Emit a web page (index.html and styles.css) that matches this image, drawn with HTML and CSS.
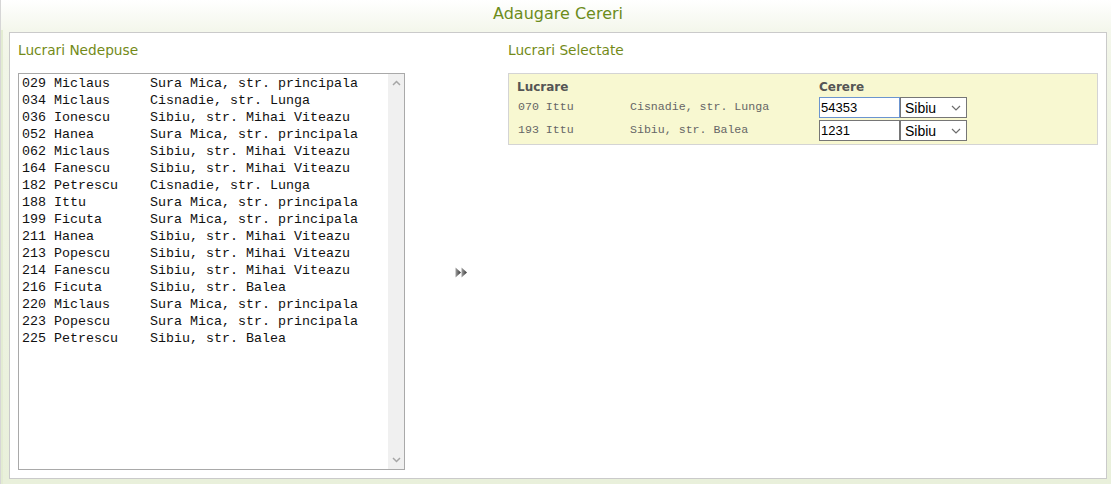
FILE: index.html
```html
<!DOCTYPE html>
<html>
<head>
<meta charset="utf-8">
<title>Adaugare Cereri</title>
<link rel="stylesheet" href="styles.css">
</head>
<body>
<div class="page">
  <div class="header">Adaugare Cereri</div>
  <div class="panel">
    <div class="col-title">Lucrari Nedepuse</div>
    <div></div>
    <div class="col-title">Lucrari Selectate</div>

    <div class="listbox">
      <div class="list-items">
        <div class="item">029 Miclaus     Sura Mica, str. principala</div>
        <div class="item">034 Miclaus     Cisnadie, str. Lunga</div>
        <div class="item">036 Ionescu     Sibiu, str. Mihai Viteazu</div>
        <div class="item">052 Hanea       Sura Mica, str. principala</div>
        <div class="item">062 Miclaus     Sibiu, str. Mihai Viteazu</div>
        <div class="item">164 Fanescu     Sibiu, str. Mihai Viteazu</div>
        <div class="item">182 Petrescu    Cisnadie, str. Lunga</div>
        <div class="item">188 Ittu        Sura Mica, str. principala</div>
        <div class="item">199 Ficuta      Sura Mica, str. principala</div>
        <div class="item">211 Hanea       Sibiu, str. Mihai Viteazu</div>
        <div class="item">213 Popescu     Sibiu, str. Mihai Viteazu</div>
        <div class="item">214 Fanescu     Sibiu, str. Mihai Viteazu</div>
        <div class="item">216 Ficuta      Sibiu, str. Balea</div>
        <div class="item">220 Miclaus     Sura Mica, str. principala</div>
        <div class="item">223 Popescu     Sura Mica, str. principala</div>
        <div class="item">225 Petrescu    Sibiu, str. Balea</div>
      </div>
      <div class="scrollbar">
        <svg class="sb-arrow" width="9" height="6" viewBox="0 0 9 6"><path d="M1 5 L4.5 1.5 L8 5" fill="none" stroke="#a6a6a6" stroke-width="1.5"/></svg>
        <svg class="sb-arrow" width="9" height="6" viewBox="0 0 9 6"><path d="M1 1 L4.5 4.5 L8 1" fill="none" stroke="#a6a6a6" stroke-width="1.5"/></svg>
      </div>
    </div>

    <div class="mover">
      <svg width="13" height="11" viewBox="0 0 13 11">
        <defs>
          <linearGradient id="tg" x1="0" y1="0" x2="1" y2="0">
            <stop offset="0" stop-color="#a0a0a0"/>
            <stop offset="1" stop-color="#333"/>
          </linearGradient>
        </defs>
        <polygon points="0.5,0.5 6,5.5 0.5,10.5" fill="url(#tg)"/>
        <polygon points="6.5,0.5 12,5.5 6.5,10.5" fill="url(#tg)"/>
      </svg>
    </div>

    <div class="selected">
      <div class="sel-box">
        <div class="th">Lucrare</div>
        <div class="th"></div>
        <div class="th">Cerere</div>

        <div class="td mono">070 Ittu</div>
        <div class="td mono">Cisnadie, str. Lunga</div>
        <div class="td ctrls">
          <input class="num focused" type="text" value="54353">
          <span class="city-wrap">
            <select class="city"><option>Sibiu</option></select>
            <svg class="chev" width="10" height="6" viewBox="0 0 10 6"><path d="M1 1 L5 5 L9 1" fill="none" stroke="#6d6d6d" stroke-width="1.2"/></svg>
          </span>
        </div>

        <div class="td mono">193 Ittu</div>
        <div class="td mono">Sibiu, str. Balea</div>
        <div class="td ctrls">
          <input class="num" type="text" value="1231">
          <span class="city-wrap">
            <select class="city"><option>Sibiu</option></select>
            <svg class="chev" width="10" height="6" viewBox="0 0 10 6"><path d="M1 1 L5 5 L9 1" fill="none" stroke="#6d6d6d" stroke-width="1.2"/></svg>
          </span>
        </div>
      </div>
    </div>
  </div>
</div>
</body>
</html>
```

FILE: styles.css
```css
html, body {
  margin: 0;
  padding: 0;
}

body {
  width: 1111px;
  height: 484px;
  overflow: hidden;
  background: #e6eed7;
  font-family: "DejaVu Sans", Verdana, sans-serif;
}

.page {
  box-sizing: border-box;
  height: 484px;
  border-left: 1px solid #d6d6d6;
  background: linear-gradient(to bottom, #ffffff 0px, #f4f7ec 30px, #f1f5e7 60px, #e9f0db 484px);
  padding: 0 4px 5px 8px;
  display: flex;
  flex-direction: column;
  position: relative;
}

.page::before {
  content: "";
  position: absolute;
  left: 0;
  top: 30px;
  bottom: 0;
  width: 2px;
  background: #e3ecd2;
}

.header {
  height: 32px;
  line-height: 28px;
  text-align: center;
  font-size: 16px;
  color: #6c8c1c;
}

.panel {
  flex: 1;
  background: #ffffff;
  border: 1px solid #cacaca;
  padding: 8px;
  display: grid;
  grid-template-columns: 387px 103px 1fr;
  grid-template-rows: 18px 1fr;
  row-gap: 14px;
  position: relative;
  z-index: 1;
}

.col-title {
  font-size: 13.7px;
  line-height: 18px;
  color: #738a18;
}

.listbox {
  border: 1px solid #a9a9a9;
  display: flex;
  background: #fff;
}

.list-items {
  flex: 1;
  padding: 1px 0 0 3px;
}

.item {
  font-family: "Liberation Mono", "Courier New", monospace;
  font-size: 13.33px;
  line-height: 17px;
  height: 17px;
  white-space: pre;
  color: #111;
}

.scrollbar {
  width: 16px;
  background: #f0f0f0;
  display: flex;
  flex-direction: column;
  justify-content: space-between;
  align-items: center;
  padding: 6px 0 6px;
}

.sb-arrow {
  display: block;
}

.mover {
  display: flex;
  align-items: center;
  justify-content: center;
  padding-left: 9px;
  padding-top: 2px;
}

.mover svg {
  display: block;
}

.selected {
  align-self: start;
}

.sel-box {
  background: #f8f8d1;
  border: 1px solid #d4d4d4;
  padding: 3px 8px 1px 8px;
  display: grid;
  grid-template-columns: 112px 190px 1fr;
  grid-auto-rows: 23px;
  grid-template-rows: 20px;
}

.th {
  font-weight: bold;
  font-size: 12px;
  line-height: 20px;
  color: #555;
}

.td {
  display: flex;
  align-items: flex-start;
}

.mono {
  font-family: "Liberation Mono", "Courier New", monospace;
  font-size: 11.6px;
  line-height: 20px;
  color: #666;
  white-space: pre;
  padding-left: 1px;
}

.num {
  box-sizing: border-box;
  width: 81px;
  height: 21px;
  margin: 0;
  padding: 0 1px;
  border: 1px solid #767676;
  border-radius: 0;
  font-family: "Liberation Sans", Arial, sans-serif;
  font-size: 13px;
  color: #000;
  background: #fff;
  outline: none;
}

.num.focused {
  border-color: #6b94cf;
}

.city-wrap {
  position: relative;
  display: block;
  width: 67px;
  height: 21px;
}

.city {
  -webkit-appearance: none;
  appearance: none;
  box-sizing: border-box;
  width: 67px;
  height: 21px;
  margin: 0;
  padding: 0 0 0 4px;
  border: 1px solid #767676;
  border-radius: 0;
  font-family: "Liberation Sans", Arial, sans-serif;
  font-size: 14px;
  color: #000;
  background: #fff;
}

.chev {
  position: absolute;
  right: 6px;
  top: 8px;
  pointer-events: none;
}
```
